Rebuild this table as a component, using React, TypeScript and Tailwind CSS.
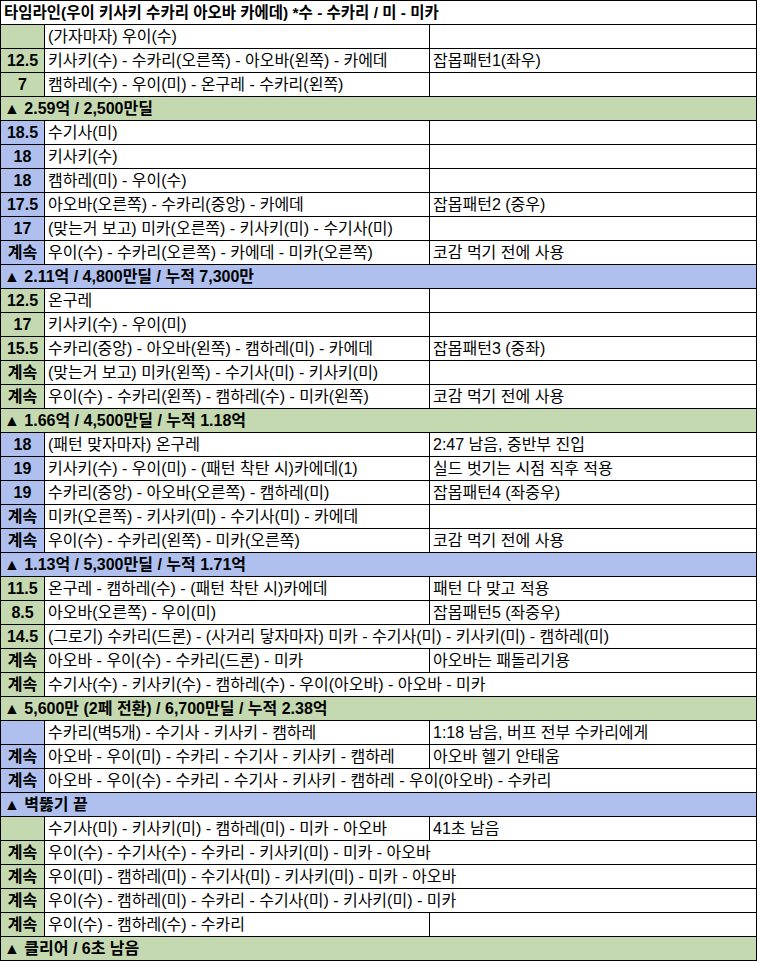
import React from 'react';

type Tone = 'green' | 'blue';

type Row =
  | { kind: 'title'; text: string }
  | { kind: 'header'; text: string; tone: Tone }
  | { kind: 'data'; num: string; main: string; note?: string; wide?: boolean; tone: Tone };

const G: Tone = 'green';
const B: Tone = 'blue';

const rows: Row[] = [
  { kind: 'title', text: '타임라인(우이 키사키 수카리 아오바 카에데) *수 - 수카리 / 미 - 미카' },
  { kind: 'data', tone: G, num: '', main: '(가자마자) 우이(수)' },
  { kind: 'data', tone: G, num: '12.5', main: '키사키(수) - 수카리(오른쪽) - 아오바(왼쪽) - 카에데', note: '잡몹패턴1(좌우)' },
  { kind: 'data', tone: G, num: '7', main: '캠하레(수) - 우이(미) - 온구레 - 수카리(왼쪽)' },
  { kind: 'header', tone: G, text: '▲ 2.59억 / 2,500만딜' },
  { kind: 'data', tone: B, num: '18.5', main: '수기사(미)' },
  { kind: 'data', tone: B, num: '18', main: '키사키(수)' },
  { kind: 'data', tone: B, num: '18', main: '캠하레(미) - 우이(수)' },
  { kind: 'data', tone: B, num: '17.5', main: '아오바(오른쪽) - 수카리(중앙) - 카에데', note: '잡몹패턴2 (중우)' },
  { kind: 'data', tone: B, num: '17', main: '(맞는거 보고) 미카(오른쪽) - 키사키(미) - 수기사(미)' },
  { kind: 'data', tone: B, num: '계속', main: '우이(수) - 수카리(오른쪽) - 카에데 - 미카(오른쪽)', note: '코감 먹기 전에 사용' },
  { kind: 'header', tone: B, text: '▲ 2.11억 / 4,800만딜 / 누적 7,300만' },
  { kind: 'data', tone: G, num: '12.5', main: '온구레' },
  { kind: 'data', tone: G, num: '17', main: '키사키(수) - 우이(미)' },
  { kind: 'data', tone: G, num: '15.5', main: '수카리(중앙) - 아오바(왼쪽) - 캠하레(미) - 카에데', note: '잡몹패턴3 (중좌)' },
  { kind: 'data', tone: G, num: '계속', main: '(맞는거 보고) 미카(왼쪽) - 수기사(미) - 키사키(미)' },
  { kind: 'data', tone: G, num: '계속', main: '우이(수) - 수카리(왼쪽) - 캠하레(수) - 미카(왼쪽)', note: '코감 먹기 전에 사용' },
  { kind: 'header', tone: G, text: '▲ 1.66억 / 4,500만딜 / 누적 1.18억' },
  { kind: 'data', tone: B, num: '18', main: '(패턴 맞자마자) 온구레', note: '2:47 남음, 중반부 진입' },
  { kind: 'data', tone: B, num: '19', main: '키사키(수) - 우이(미) - (패턴 착탄 시)카에데(1)', note: '실드 벗기는 시점 직후 적용' },
  { kind: 'data', tone: B, num: '19', main: '수카리(중앙) - 아오바(오른쪽) - 캠하레(미)', note: '잡몹패턴4 (좌중우)' },
  { kind: 'data', tone: B, num: '계속', main: '미카(오른쪽) - 키사키(미) - 수기사(미) - 카에데' },
  { kind: 'data', tone: B, num: '계속', main: '우이(수) - 수카리(왼쪽) - 미카(오른쪽)', note: '코감 먹기 전에 사용' },
  { kind: 'header', tone: B, text: '▲ 1.13억 / 5,300만딜 / 누적 1.71억' },
  { kind: 'data', tone: G, num: '11.5', main: '온구레 - 캠하레(수) - (패턴 착탄 시)카에데', note: '패턴 다 맞고 적용' },
  { kind: 'data', tone: G, num: '8.5', main: '아오바(오른쪽) - 우이(미)', note: '잡몹패턴5 (좌중우)' },
  { kind: 'data', tone: G, num: '14.5', main: '(그로기) 수카리(드론) - (사거리 닿자마자) 미카 - 수기사(미) - 키사키(미) - 캠하레(미)', wide: true },
  { kind: 'data', tone: G, num: '계속', main: '아오바 - 우이(수) - 수카리(드론) - 미카', note: '아오바는 패돌리기용' },
  { kind: 'data', tone: G, num: '계속', main: '수기사(수) - 키사키(수) - 캠하레(수) - 우이(아오바) - 아오바 - 미카', wide: true },
  { kind: 'header', tone: G, text: '▲ 5,600만 (2페 전환) / 6,700만딜 / 누적 2.38억' },
  { kind: 'data', tone: B, num: '', main: '수카리(벽5개) - 수기사 - 키사키 - 캠하레', note: '1:18 남음, 버프 전부 수카리에게' },
  { kind: 'data', tone: B, num: '계속', main: '아오바 - 우이(미) - 수카리 - 수기사 - 키사키 - 캠하레', note: '아오바 헬기 안태움' },
  { kind: 'data', tone: B, num: '계속', main: '아오바 - 우이(수) - 수카리 - 수기사 - 키사키 - 캠하레 - 우이(아오바) - 수카리', wide: true },
  { kind: 'header', tone: B, text: '▲ 벽뚫기 끝' },
  { kind: 'data', tone: G, num: '', main: '수기사(미) - 키사키(미) - 캠하레(미) - 미카 - 아오바', note: '41초 남음' },
  { kind: 'data', tone: G, num: '계속', main: '우이(수) - 수기사(수) - 수카리 - 키사키(미) - 미카 - 아오바', wide: true },
  { kind: 'data', tone: G, num: '계속', main: '우이(미) - 캠하레(미) - 수기사(미) - 키사키(미) - 미카 - 아오바', wide: true },
  { kind: 'data', tone: G, num: '계속', main: '우이(수) - 캠하레(미) - 수카리 - 수기사(미) - 키사키(미) - 미카', wide: true },
  { kind: 'data', tone: G, num: '계속', main: '우이(수) - 캠하레(수) - 수카리' },
  { kind: 'header', tone: G, text: '▲ 클리어 / 6초 남음' },
];

const toneBg: Record<Tone, string> = {
  green: 'bg-[#c5d9b1]',
  blue: 'bg-[#afc0ee]',
};

const cell = 'border border-black h-[24px] px-[3px] py-0 leading-[22px] whitespace-nowrap overflow-hidden';

export default function App() {
  return (
    <div className="bg-white min-h-screen text-black text-[16px] font-['Liberation_Sans','Noto_Sans_CJK_KR',sans-serif]">
      <table className="w-[757px] border-collapse table-fixed">
        <colgroup>
          <col className="w-[44px]" />
          <col className="w-[385px]" />
          <col />
        </colgroup>
        <tbody>
          {rows.map((r, i) => {
            if (r.kind === 'title') {
              return (
                <tr key={i}>
                  <td colSpan={3} className={`${cell} font-bold text-[15.5px]`}>{r.text}</td>
                </tr>
              );
            }
            if (r.kind === 'header') {
              return (
                <tr key={i}>
                  <td colSpan={3} className={`${cell} font-bold ${toneBg[r.tone]}`}>{r.text}</td>
                </tr>
              );
            }
            return (
              <tr key={i}>
                <td className={`${cell} px-0 text-center font-bold ${toneBg[r.tone]}`}>{r.num}</td>
                {r.wide ? (
                  <td colSpan={2} className={cell}>{r.main}</td>
                ) : (
                  <>
                    <td className={cell}>{r.main}</td>
                    <td className={cell}>{r.note ?? ''}</td>
                  </>
                )}
              </tr>
            );
          })}
        </tbody>
      </table>
    </div>
  );
}
